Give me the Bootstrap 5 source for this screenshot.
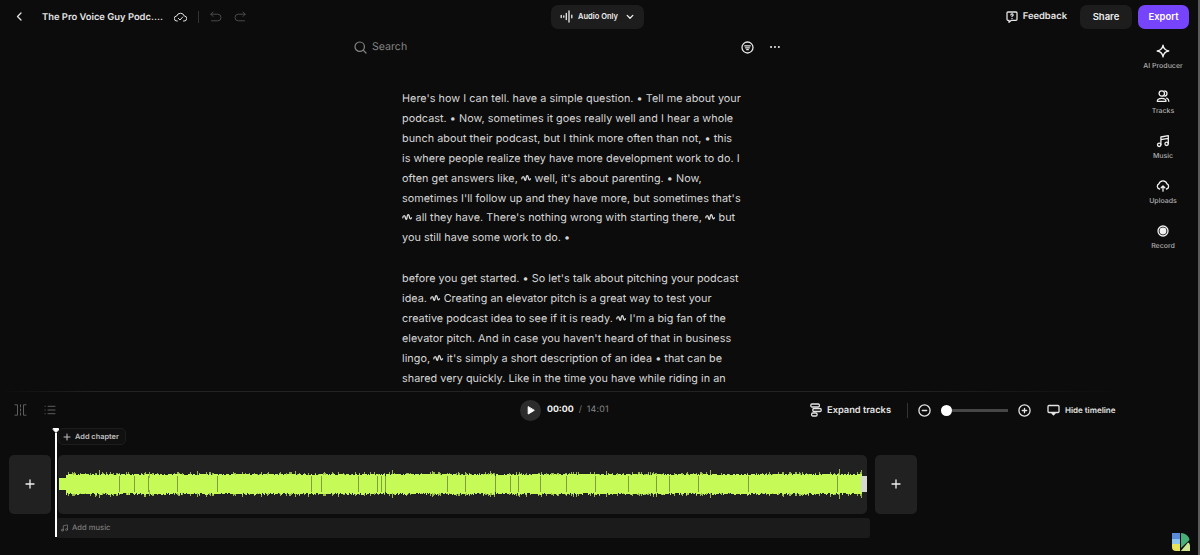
<!DOCTYPE html>
<html lang="en">
<head>
    <meta charset="UTF-8">
    <meta name="viewport" content="width=device-width, initial-scale=1.0">
    <title>Podcast Editor</title>
    <link href="https://cdn.jsdelivr.net/npm/bootstrap@5.3.0/dist/css/bootstrap.min.css" rel="stylesheet">
    <style>
        body {
            background-color: #0c0c0c;
            color: #e4e4e4;
            font-family: Inter, "Liberation Sans", sans-serif;
            font-size: 10px;
            line-height: 1;
            height: 555px;
            overflow: hidden;
            text-rendering: geometricPrecision;
        }
        svg {
            display: block;
            flex: none;
            fill: none;
            stroke: currentColor;
            stroke-width: 1.3;
            stroke-linecap: round;
            stroke-linejoin: round;
        }
        .stroke-thin { stroke-width: 1; }
        .stroke-bold { stroke-width: 2; }
        .editor {
            height: 555px;
            border-right: 2px solid #5c5c5c;
        }
        .topbar {
            display: grid;
            grid-template-columns: 551px 93px 1fr;
            height: 33px;
        }
        .topbar-left { padding-left: 13px; }
        .project-name {
            width: 121px;
            margin: 0 11px 0 16px;
            padding-top: 2px;
            font-size: 9.4px;
            font-weight: 600;
            white-space: nowrap;
        }
        .vline {
            width: 1px;
            height: 12px;
            background-color: #333;
        }
        .topline { margin-left: 11px; }
        .undo { margin-left: 11px; }
        .redo { margin-left: 12px; }
        .dim { color: #4a4a4a; }
        .btn-bar {
            --bs-btn-color: #eee;
            --bs-btn-bg: #1d1d1d;
            --bs-btn-border-width: 0;
            --bs-btn-border-radius: 7px;
            --bs-btn-padding-x: 0;
            --bs-btn-padding-y: 0;
            --bs-btn-font-size: 9.5px;
            --bs-btn-font-weight: 600;
            height: 24px;
            line-height: 24px;
        }
        .btn-mode {
            --bs-btn-font-size: 7.5px;
            height: 24px;
            padding: 0 9px;
            white-space: nowrap;
        }
        .btn-mode span { width: 40px; margin: 0 8px 0 4px; }
        .btn-share { width: 52px; }
        .btn-export {
            --bs-btn-color: #fff;
            --bs-btn-bg: #7645fb;
            width: 51px;
        }
        .topbar-right { padding-right: 9px; gap: 6px; }
        .feedback { font-size: 9.4px; font-weight: 600; gap: 5px; margin-right: 7px; }
        .feedback span { padding-top: 1px; }
        .stage { height: 358px; }
        .script-col {
            width: 426px;
            margin-left: 354px;
        }
        .searchbar { height: 28px; }
        .search-icon { color: #858585; stroke-width: 1.2; }
        .search-label { font-size: 10.6px; color: #858585; margin-left: 5px; }
        .transcript {
            width: 350px;
            margin: 28.4px 0 0 48px;
            font-size: 10.8px;
            letter-spacing: .04px;
            line-height: 19.85px;
            color: #d6d6d6;
        }
        .transcript p { margin-bottom: 21.2px; }
        .transcript span { display: block; white-space: nowrap; }
        .transcript svg {
            display: inline-block;
            vertical-align: -1px;
            stroke-width: 1.3;
        }
        .tools {
            width: 60px;
            margin-right: 5px;
            padding-top: 11px;
        }
        .tool {
            height: 45px;
            font-size: 7px;
            font-weight: 500;
            color: #adadad;
        }
        .tool svg { color: #f0f0f0; margin-bottom: 4px; }
        .hairline {
            height: 1px;
            background: linear-gradient(90deg, transparent, #232323 8%, #232323 75%, transparent 94%);
        }
        .controls {
            display: grid;
            grid-template-columns: 520px 290px 1fr;
            height: 36px;
        }
        .controls-left { padding-left: 14px; gap: 17px; color: #5e5e5e; }
        .play {
            width: 21px;
            height: 21px;
            background-color: #2c2c2c;
            border-radius: 50%;
        }
        .time { font-size: 8.8px; margin-left: 6px; padding-top: 1px; }
        .time b { font-weight: 700; color: #f4f4f4; }
        .time i { font-style: normal; color: #777; margin: 0 5px; }
        .time em { font-style: normal; color: #858585; letter-spacing: .2px; }
        .controls-right { font-weight: 600; white-space: nowrap; }
        .expand-label { width: 64px; margin: 0 16px 0 5px; padding-top: 1px; font-size: 9.3px; }
        .zoom-line { height: 15px; margin-right: 10px; }
        .slider {
            width: 67px;
            height: 11px;
            margin: 0 10px;
            background: linear-gradient(#464646, #464646) center / 100% 3px no-repeat;
        }
        .knob {
            width: 11px;
            height: 11px;
            border-radius: 50%;
            background-color: #fff;
        }
        .hide-label { font-size: 8px; margin-left: 5px; }
        .timeline { padding-left: 9px; }
        .chapter {
            width: 68px;
            height: 17px;
            margin-left: 49px;
            border: 1px solid #1d1d1d;
            border-radius: 5px;
            font-size: 7.4px;
            font-weight: 600;
            color: #c0c0c0;
            gap: 4px;
            padding-left: 4px;
            background-color: #101010;
        }
        .tracks { margin-top: 10px; }
        .add-clip, .clip {
            height: 59px;
            background-color: #212121;
            border-radius: 5px;
        }
        .add-clip { width: 42px; }
        .add-clip svg { margin-top: -1px; color: #f0f0f0; }
        .clip { width: 809px; margin: 0 8px 0 7px; }
        .clip svg { stroke: none; }
        .music {
            width: 814px;
            height: 20px;
            margin: 4px 0 0 47px;
            padding-left: 4px;
            gap: 3px;
            border-radius: 3px;
            background-color: #1b1b1b;
            color: #7c7c7c;
            font-size: 7.6px;
            font-weight: 500;
        }
        .playhead {
            position: absolute;
            left: 52px;
            top: 0;
        }
        .playhead .stem { stroke-width: 2; stroke-linecap: butt; }
        .brand {
            position: absolute;
            right: 7px;
            bottom: 3px;
            stroke: none;
        }
    </style>
</head>
<body>
    <div class="editor position-relative">
        <!-- Top bar -->
        <header class="topbar align-items-center">
            <div class="topbar-left d-flex align-items-center">
                <svg width="13" height="13" viewBox="0 0 13 13"><path d="M8 3 4.5 6.5 8 10"/></svg>
                <div class="project-name">The Pro Voice Guy Podc....</div>
                <svg class="stroke-thin" width="13" height="12" viewBox="0 0 13 12"><path d="M3.4 10H2.9A2.5 2.5 0 0 1 2.7 5 4 4 0 0 1 10.3 5 2.5 2.5 0 0 1 10.1 10H9.5M4.4 7.4 6 9 8.7 6"/></svg>
                <div class="vline topline"></div>
                <svg class="dim undo stroke-thin" width="12" height="12" viewBox="0 0 12 12"><path d="M3 1 .8 3.2 3 5.4M.8 3.2H7.7A3.2 3.2 0 0 1 7.7 9.8H1.5"/></svg>
                <svg class="dim redo stroke-thin" width="12" height="12" viewBox="0 0 12 12"><path d="M9 1 11.2 3.2 9 5.4M11.2 3.2H4.3A3.2 3.2 0 0 0 4.3 9.8H10.5"/></svg>
            </div>
            <button class="btn btn-bar btn-mode d-flex align-items-center">
                <svg width="14" height="13" viewBox="0 0 14 13"><path d="M1.2 5.5V7.5M3.8 5.8V7.2M6.3 3.5V9.5M9 1V12M11.8 5.2V7.8"/></svg>
                <span>Audio Only</span>
                <svg width="8" height="6" viewBox="0 0 8 6"><path d="M1.2 1.4 4 4.2 6.8 1.4"/></svg>
            </button>
            <div class="topbar-right d-flex align-items-center justify-content-end">
                <div class="feedback d-flex align-items-center">
                    <svg width="12" height="12" viewBox="0 0 12 12"><path d="M2 1H10A1 1 0 0 1 11 2V8.3A1 1 0 0 1 10 9.3H5.4L3 11.3V9.3H2A1 1 0 0 1 1 8.3V2A1 1 0 0 1 2 1ZM4.9 3.9A1.1 1.1 0 1 1 6.5 4.9L6 5.4M6 7.3V7.4"/></svg>
                    <span>Feedback</span>
                </div>
                <button class="btn btn-bar btn-share">Share</button>
                <button class="btn btn-bar btn-export">Export</button>
            </div>
        </header>

        <!-- Transcript and side tools -->
        <main class="stage d-flex justify-content-between overflow-hidden">
            <div class="script-col">
                <div class="searchbar d-flex align-items-center">
                    <svg class="search-icon" width="13" height="13" viewBox="0 0 13 13"><circle cx="5.7" cy="5.7" r="4.7"/><path d="M9.2 9.2 12 12"/></svg>
                    <span class="search-label">Search</span>
                    <svg class="ms-auto" width="13" height="13" viewBox="0 0 13 13"><circle cx="6.5" cy="6.5" r="5.5"/><path d="M3.7 4.8H9.3M4.5 6.8H8.5M5.7 8.7H7.3"/></svg>
                    <svg class="stroke-bold ms-3" width="10" height="4" viewBox="0 0 10 4"><path d="M1 2H1.1M4.9 2H5M8.8 2H8.9"/></svg>
                </div>
                <div class="transcript" id="transcript"></div>
            </div>
            <nav class="tools">
                <div class="tool d-flex flex-column align-items-center">
                    <svg width="14" height="14" viewBox="0 0 14 14"><path d="M7 1.2C7.5 4.7 9.2 6.4 12.8 7 9.2 7.6 7.5 9.3 7 12.8 6.5 9.3 4.8 7.6 1.2 7 4.8 6.4 6.5 4.7 7 1.2Z"/></svg>
                    AI Producer
                </div>
                <div class="tool d-flex flex-column align-items-center">
                    <svg width="14" height="14" viewBox="0 0 14 14"><circle cx="5.8" cy="4.5" r="2.7"/><path d="M1.3 12.3C1.3 10.3 3 9.3 5.8 9.3S10 10.3 10 12.3ZM8.8 1.8A2.7 2.7 0 0 1 8.8 7.1M10.7 9.2C12.2 9.8 12.8 10.8 12.8 12.3"/></svg>
                    Tracks
                </div>
                <div class="tool d-flex flex-column align-items-center">
                    <svg width="14" height="14" viewBox="0 0 14 14"><circle cx="3.2" cy="10.8" r="1.7"/><circle cx="10.6" cy="9.8" r="1.7"/><path d="M4.9 10.8V3L12.3 1.6V9.8M4.9 5.6 12.3 4.3"/></svg>
                    Music
                </div>
                <div class="tool d-flex flex-column align-items-center">
                    <svg width="14" height="14" viewBox="0 0 14 14"><path d="M3.5 10A2.7 2.7 0 0 1 2.9 4.9 4.2 4.2 0 0 1 11 4.9 2.7 2.7 0 0 1 10.5 10M7 12.2V7M5.2 8.7 7 6.9 8.8 8.7"/></svg>
                    Uploads
                </div>
                <div class="tool d-flex flex-column align-items-center">
                    <svg width="14" height="14" viewBox="0 0 14 14"><circle cx="7" cy="7" r="5"/><circle cx="7" cy="7" r="2.8" fill="currentColor"/></svg>
                    Record
                </div>
            </nav>
        </main>

        <!-- Playback controls -->
        <div class="hairline"></div>
        <div class="controls align-items-center">
            <div class="controls-left d-flex align-items-center">
                <svg class="stroke-thin" width="13" height="12" viewBox="0 0 13 12"><path d="M1 .8H3.5V11.2H1M12 .8H9.5V11.2H12M6.5 .8V3M6.5 5V7M6.5 9V11.2"/></svg>
                <svg class="stroke-thin" width="12" height="10" viewBox="0 0 12 10"><path d="M4 1.3H11M4 5H11M4 8.7H11M1 1.3H1.2M1 5H1.2M1 8.7H1.2"/></svg>
            </div>
            <div class="d-flex align-items-center">
                <div class="play d-flex align-items-center justify-content-center">
                    <svg class="stroke-thin" width="8" height="9" viewBox="0 0 8 9"><path d="M1.2 1V8L7 4.5Z" fill="#fff" stroke="#fff"/></svg>
                </div>
                <div class="time"><b>00:00</b><i>/</i><em>14:01</em></div>
            </div>
            <div class="controls-right d-flex align-items-center">
                <svg width="12" height="14" viewBox="0 0 12 14"><rect x=".8" y="1" width="8.6" height="3" rx="1.2"/><rect x="2.8" y="5.5" width="8.4" height="3" rx="1.2"/><rect x="1.6" y="10" width="5.5" height="3" rx="1.2"/></svg>
                <span class="expand-label">Expand tracks</span>
                <div class="vline zoom-line"></div>
                <svg width="13" height="13" viewBox="0 0 13 13"><circle cx="6.5" cy="6.5" r="5.6"/><path d="M4.3 6.5H8.7"/></svg>
                <div class="slider"><div class="knob"></div></div>
                <svg width="13" height="13" viewBox="0 0 13 13"><circle cx="6.5" cy="6.5" r="5.6"/><path d="M4.3 6.5H8.7M6.5 4.3V8.7"/></svg>
                <svg class="ms-3" width="13" height="12" viewBox="0 0 13 12"><rect x="1" y="1.5" width="11" height="7" rx="1"/><path d="M5 9.4H8L6.5 10.9Z" fill="currentColor"/></svg>
                <span class="hide-label">Hide timeline</span>
            </div>
        </div>

        <!-- Timeline -->
        <section class="timeline position-relative">
            <div class="chapter d-flex align-items-center">
                <svg class="stroke-thin" width="8" height="8" viewBox="0 0 8 8"><path d="M4 1V7M1 4H7"/></svg>
                Add chapter
            </div>
            <div class="tracks d-flex">
                <div class="add-clip d-flex align-items-center justify-content-center">
                    <svg width="10" height="10" viewBox="0 0 10 10"><path d="M5 1V9M1 5H9"/></svg>
                </div>
                <div class="clip">
                    <svg width="809" height="59" viewBox="0 0 809 59" shape-rendering="crispEdges">
                        <path id="wave-spikes" fill="#94b94a"/>
                        <path id="wave" fill="#c6fb57"/>
                        <path id="wave-cuts" fill="#7f9e40"/>
                        <rect x="803" y="21" width="6" height="16" fill="#d5d9cf"/>
                    </svg>
                </div>
                <div class="add-clip d-flex align-items-center justify-content-center">
                    <svg width="10" height="10" viewBox="0 0 10 10"><path d="M5 1V9M1 5H9"/></svg>
                </div>
            </div>
            <div class="music d-flex align-items-center">
                <svg width="9" height="8" viewBox="0 0 14 14"><circle cx="3.2" cy="10.8" r="1.7"/><circle cx="10.6" cy="9.8" r="1.7"/><path d="M4.9 10.8V3L12.3 1.6V9.8"/></svg>
                Add music
            </div>
            <svg class="playhead" width="8" height="110" viewBox="0 0 8 110"><path class="stroke-thin" d="M1.5 .5H6.5V2L4 4.5 1.5 2Z" fill="#fff" stroke="#fff"/><path class="stem" d="M4 5V109" stroke="#fff"/></svg>
        </section>

        <svg class="brand" width="20" height="20" viewBox="0 0 20 20">
            <path d="M1 1H9V7H1Z" fill="#5b8bd8"/>
            <path d="M1 7H9V12H1Z" fill="#8ec5ea"/>
            <path d="M1 12H9V19H5A4 4 0 0 1 1 15Z" fill="#e6e45d"/>
            <path d="M10 1C14 1 18 4 18.5 8L10 16Z" fill="#46b078"/>
            <path d="M9.8 19 17 10.5C18.5 11 19 12.5 19 14V19Z" fill="#cfe695"/>
        </svg>
    </div>

    <script src="https://cdn.jsdelivr.net/npm/bootstrap@5.3.0/dist/js/bootstrap.bundle.min.js"></script>
    <script>
        // "~" marks a filler word that was cut
        const paragraphs = [
            [
                "Here's how I can tell. have a simple question. • Tell me about your",
                "podcast. • Now, sometimes it goes really well and I hear a whole",
                "bunch about their podcast, but I think more often than not, • this",
                "is where people realize they have more development work to do. I",
                "often get answers like, ~ well, it's about parenting. • Now,",
                "sometimes I'll follow up and they have more, but sometimes that's",
                "~ all they have. There's nothing wrong with starting there, ~ but",
                "you still have some work to do. •"
            ],
            [
                "before you get started. • So let's talk about pitching your podcast",
                "idea. ~ Creating an elevator pitch is a great way to test your",
                "creative podcast idea to see if it is ready. ~ I'm a big fan of the",
                "elevator pitch. And in case you haven't heard of that in business",
                "lingo, ~ it's simply a short description of an idea • that can be",
                "shared very quickly. Like in the time you have while riding in an"
            ]
        ];
        const squiggle = '<svg width="10.5" height="9" viewBox="0 0 10.5 9"><path d="M.8 4.8C1 2.4 2.8 2 3.2 4S4.6 7.8 5 4.6 6.8 .4 7.2 3.2 8.6 6.4 9.5 4.8"/></svg>';
        document.getElementById('transcript').innerHTML = paragraphs.map(lines =>
            '<p>' + lines.map(line => `<span>${line.replaceAll('~', squiggle)}</span>`).join('') + '</p>'
        ).join('');

        // Waveform, one bar per pixel
        const peaks = { 41: 14, 132: 12, 139: 13, 237: 13, 266: 12, 334: 14, 374: 13, 407: 12, 432: 13, 548: 13, 592: 12, 652: 14, 711: 12, 731: 12, 781: 15, 803: 14 };
        const cuts = [61, 76, 90, 119, 159, 253, 263, 300, 319, 323, 327, 389, 407, 437, 452, 460, 482, 508, 537, 570, 598, 611, 640, 690, 779];
        const gaps = [91, 327, 437];
        let seed = 7;
        function random() {
            seed = (seed * 16807) % 2147483647;
            return seed / 2147483647;
        }
        function bar(x, up, down) {
            return `M${x} ${29 - up}h1v${up + down}h-1z`;
        }
        let wave = '';
        let spikes = '';
        for (let x = 1; x < 804; x++) {
            let up = x < 8 ? 6 : 9 + Math.round(random() * 1.4);
            let down = x < 8 ? 6 : 9 + Math.round(random() * 1.8);
            if (x > 8 && random() > .75) {
                const extra = 1 + Math.round(random());
                spikes += bar(x, up + extra, down + extra);
            }
            if (peaks[x]) {
                spikes += bar(x, peaks[x], peaks[x]);
            }
            if (gaps.includes(x)) {
                up = down = 6;
            }
            wave += bar(x, up, down);
        }
        document.getElementById('wave').setAttribute('d', wave);
        document.getElementById('wave-spikes').setAttribute('d', spikes);
        document.getElementById('wave-cuts').setAttribute('d', cuts.map(x => bar(x, 8, 8)).join(''));
    </script>
</body>
</html>
